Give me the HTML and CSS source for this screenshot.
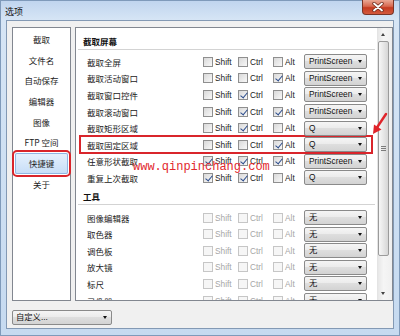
FILE: index.html
```html
<!DOCTYPE html>
<html lang="zh-CN">
<head>
    <meta charset="UTF-8">
    <meta name="viewport" content="width=device-width, initial-scale=1.0">
    <title>选项</title>
    <link rel="stylesheet" href="styles.css">
</head>
<body>
    <div class="window">
        <div class="titlebar">
            <span class="title">选项</span>
            <div class="close-btn">
                <svg viewBox="0 0 12 10" width="12" height="10">
                    <path d="M2 1.5 L10 8.5 M10 1.5 L2 8.5" stroke="#6b2a1c" stroke-width="3.4" stroke-linecap="round"/>
                    <path d="M2 1.5 L10 8.5 M10 1.5 L2 8.5" stroke="#fff" stroke-width="1.8" stroke-linecap="round"/>
                </svg>
            </div>
        </div>

        <div class="client">
            <div class="panes">
                <ul class="nav">
                    <li>截取</li>
                    <li>文件名</li>
                    <li>自动保存</li>
                    <li>编辑器</li>
                    <li>图像</li>
                    <li>FTP 空间</li>
                    <li class="selected">快捷键</li>
                    <li>关于</li>
                </ul>

                <div class="main">
                    <div class="content">
                        <div class="section">
                            <div class="section-head">截取屏幕</div>
                            <div class="rows">
                                <div class="row">
                                    <span class="label">截取全屏</span>
                                    <span class="check"><span class="box"></span>Shift</span>
                                    <span class="check"><span class="box"></span>Ctrl</span>
                                    <span class="check"><span class="box"></span>Alt</span>
                                    <span class="combo">PrintScreen</span>
                                </div>
                                <div class="row">
                                    <span class="label">截取活动窗口</span>
                                    <span class="check"><span class="box"></span>Shift</span>
                                    <span class="check"><span class="box"></span>Ctrl</span>
                                    <span class="check"><span class="box checked"></span>Alt</span>
                                    <span class="combo">PrintScreen</span>
                                </div>
                                <div class="row">
                                    <span class="label">截取窗口控件</span>
                                    <span class="check"><span class="box"></span>Shift</span>
                                    <span class="check"><span class="box checked"></span>Ctrl</span>
                                    <span class="check"><span class="box"></span>Alt</span>
                                    <span class="combo">PrintScreen</span>
                                </div>
                                <div class="row">
                                    <span class="label">截取滚动窗口</span>
                                    <span class="check"><span class="box"></span>Shift</span>
                                    <span class="check"><span class="box checked"></span>Ctrl</span>
                                    <span class="check"><span class="box checked"></span>Alt</span>
                                    <span class="combo">PrintScreen</span>
                                </div>
                                <div class="row">
                                    <span class="label">截取矩形区域</span>
                                    <span class="check"><span class="box"></span>Shift</span>
                                    <span class="check"><span class="box checked"></span>Ctrl</span>
                                    <span class="check"><span class="box"></span>Alt</span>
                                    <span class="combo">Q</span>
                                </div>
                                <div class="row marked">
                                    <span class="label">截取固定区域</span>
                                    <span class="check"><span class="box"></span>Shift</span>
                                    <span class="check"><span class="box"></span>Ctrl</span>
                                    <span class="check"><span class="box checked"></span>Alt</span>
                                    <span class="combo">Q</span>
                                </div>
                                <div class="row">
                                    <span class="label">任意形状截取</span>
                                    <span class="check"><span class="box checked"></span>Shift</span>
                                    <span class="check"><span class="box checked"></span>Ctrl</span>
                                    <span class="check"><span class="box checked"></span>Alt</span>
                                    <span class="combo">PrintScreen</span>
                                </div>
                                <div class="row">
                                    <span class="label">重复上次截取</span>
                                    <span class="check"><span class="box checked"></span>Shift</span>
                                    <span class="check"><span class="box checked"></span>Ctrl</span>
                                    <span class="check"><span class="box"></span>Alt</span>
                                    <span class="combo">Q</span>
                                </div>
                            </div>
                        </div>

                        <div class="section tools">
                            <div class="section-head">工具</div>
                            <div class="rows">
                                <div class="row disabled">
                                    <span class="label">图像编辑器</span>
                                    <span class="check"><span class="box"></span>Shift</span>
                                    <span class="check"><span class="box"></span>Ctrl</span>
                                    <span class="check"><span class="box"></span>Alt</span>
                                    <span class="combo">无</span>
                                </div>
                                <div class="row disabled">
                                    <span class="label">取色器</span>
                                    <span class="check"><span class="box"></span>Shift</span>
                                    <span class="check"><span class="box"></span>Ctrl</span>
                                    <span class="check"><span class="box"></span>Alt</span>
                                    <span class="combo">无</span>
                                </div>
                                <div class="row disabled">
                                    <span class="label">调色板</span>
                                    <span class="check"><span class="box"></span>Shift</span>
                                    <span class="check"><span class="box"></span>Ctrl</span>
                                    <span class="check"><span class="box"></span>Alt</span>
                                    <span class="combo">无</span>
                                </div>
                                <div class="row disabled">
                                    <span class="label">放大镜</span>
                                    <span class="check"><span class="box"></span>Shift</span>
                                    <span class="check"><span class="box"></span>Ctrl</span>
                                    <span class="check"><span class="box"></span>Alt</span>
                                    <span class="combo">无</span>
                                </div>
                                <div class="row disabled">
                                    <span class="label">标尺</span>
                                    <span class="check"><span class="box"></span>Shift</span>
                                    <span class="check"><span class="box"></span>Ctrl</span>
                                    <span class="check"><span class="box"></span>Alt</span>
                                    <span class="combo">无</span>
                                </div>
                                <div class="row disabled">
                                    <span class="label">录像器</span>
                                    <span class="check"><span class="box"></span>Shift</span>
                                    <span class="check"><span class="box"></span>Ctrl</span>
                                    <span class="check"><span class="box"></span>Alt</span>
                                    <span class="combo">无</span>
                                </div>
                            </div>
                        </div>
                    </div>

                    <div class="scrollbar">
                        <div class="sb-btn up"></div>
                        <div class="sb-thumb"><span class="grip"></span></div>
                        <div class="sb-track"></div>
                        <div class="sb-btn down"></div>
                    </div>
                </div>
            </div>

            <div class="footer">
                <span class="combo wide">自定义...</span>
            </div>
        </div>

        <!-- annotations drawn over the dialog -->
        <div class="watermark">www.qinpinchang.com</div>
        <svg class="pointer" viewBox="0 0 24 28" width="24" height="28">
            <line x1="20" y1="4" x2="10" y2="19" stroke="#e0242a" stroke-width="2.4" stroke-linecap="round"/>
            <polygon points="7,24 15.5,19.5 8,14.5" fill="#e0242a"/>
        </svg>
    </div>
</body>
</html>
```

FILE: styles.css
```css
* {
    box-sizing: border-box;
}
html, body {
    margin: 0;
}
body {
    width: 400px;
    height: 336px;
    overflow: hidden;
    font-family: "Noto Sans CJK SC", sans-serif;
    color: #1b1b1b;
}
.window {
    position: relative;
    width: 400px;
    height: 336px;
    display: flex;
    flex-direction: column;
    background: linear-gradient(to bottom, #bfd4ee 0, #d6e5f5 20px, #c6daf0 100%);
    box-shadow: inset 0 0 0 1px #7f9aba;
}
.titlebar {
    height: 20px;
    display: flex;
    justify-content: space-between;
    align-items: flex-start;
    padding-left: 5px;
}
.title {
    font-size: 9px;
    line-height: 20px;
    padding-top: 2px;
    color: #111;
}
.close-btn {
    width: 32px;
    height: 15px;
    margin-right: 6px;
    display: flex;
    justify-content: center;
    align-items: center;
    border: 1px solid #7a3426;
    border-top: 0;
    border-radius: 0 0 4px 4px;
    background: linear-gradient(to bottom, #eaa895, #d8684f 45%, #c53a20 55%, #d35a3e);
}
.client {
    flex: 1;
    margin: 0 6px 7px;
    border: 1px solid #8399b4;
    background: #f0f0f0;
    display: flex;
    flex-direction: column;
    padding: 6px 0 0 5px;
    min-height: 0;
}
.panes {
    flex: 1;
    display: flex;
    gap: 4px;
    min-height: 0;
}
.nav {
    width: 59px;
    margin: 0;
    padding: 1px 0 0;
    list-style: none;
    background: #fff;
    border: 1px solid #828790;
}
.nav li {
    height: 20.7px;
    line-height: 20.7px;
    margin: 0 2px;
    text-align: center;
    font-size: 8.5px;
}
.nav li.selected {
    background: linear-gradient(to bottom, #e6f1fd, #c6ddf7);
    border-radius: 2px;
    box-shadow: inset 0 0 0 1px #90b5e2;
    outline: 2px solid #d9252b;
    outline-offset: 1px;
}
.main {
    flex: 1;
    display: flex;
    background: #fff;
    border: 1px solid #828790;
    overflow: hidden;
}
.content {
    flex: 1;
    padding-top: 6px;
    overflow: hidden;
}
.section-head {
    margin: 0 2px;
    padding-left: 5px;
    height: 16px;
    line-height: 15px;
    border-bottom: 1px solid #d3d3d3;
    font-size: 8.5px;
    font-weight: bold;
    color: #111;
}
.section.tools {
    margin-top: 3px;
}
.rows {
    margin: 0 5px 0 4px;
    padding-top: 3.5px;
}
.section.tools .rows {
    padding-top: 4px;
}
.row {
    display: grid;
    grid-template-columns: 116px 35px 35px 31px 63px;
    align-items: center;
    height: 16.6px;
    padding-left: 7px;
    font-size: 8.5px;
}
.row.marked {
    outline: 2px solid #d9252b;
    outline-offset: -1px;
}
.check {
    display: flex;
    align-items: center;
    gap: 2px;
    font-family: "Liberation Sans", sans-serif;
    font-size: 8.3px;
    color: #222;
}
.box {
    position: relative;
    width: 10px;
    height: 10px;
    border: 1px solid #8f8f8f;
    background: linear-gradient(135deg, #d9d9d9, #f8f8f8);
}
.box.checked::after {
    content: "";
    position: absolute;
    left: 2.5px;
    top: 0;
    width: 3px;
    height: 6px;
    border: solid #2b4c8c;
    border-width: 0 1.6px 1.6px 0;
    transform: rotate(40deg);
}
.row.disabled .check {
    color: #a6a6a6;
}
.row.disabled .box {
    border-color: #c6c6c6;
    background: #f6f6f6;
}
.combo {
    position: relative;
    display: block;
    height: 15px;
    border: 1px solid #8a8a8a;
    border-radius: 2px;
    background: linear-gradient(to bottom, #f5f5f5, #ececec 45%, #dedede 50%, #d3d3d3);
    font-family: "Liberation Sans", "Noto Sans CJK SC", sans-serif;
    font-size: 8.3px;
    line-height: 13px;
    padding-left: 4px;
    color: #111;
}
.combo::after {
    content: "";
    position: absolute;
    right: 4px;
    top: 5px;
    width: 0;
    height: 0;
    border-left: 2.5px solid transparent;
    border-right: 2.5px solid transparent;
    border-top: 3px solid #111;
}
.combo.wide {
    width: 100px;
    padding-left: 3px;
}
.footer {
    height: 27px;
    padding-top: 9px;
}
.scrollbar {
    width: 15px;
    display: flex;
    flex-direction: column;
    background: linear-gradient(to right, #e7e7e7, #f5f5f5 40%, #efefef);
    border-left: 1px solid #e4e4e4;
}
.sb-btn {
    position: relative;
    width: 11px;
    height: 13px;
}
.sb-btn::after {
    content: "";
    position: absolute;
    left: 3px;
    top: 5px;
    width: 0;
    height: 0;
    border-left: 2.5px solid transparent;
    border-right: 2.5px solid transparent;
}
.sb-btn.up::after {
    border-bottom: 3px solid #444;
}
.sb-btn.down::after {
    border-top: 3px solid #444;
}
.sb-thumb {
    width: 11px;
    height: 215px;
    display: flex;
    justify-content: center;
    align-items: center;
    border: 1px solid #9b9b9b;
    border-radius: 2px;
    background: linear-gradient(to right, #f7f7f7, #e7e7e7 50%, #d6d6d6);
}
.grip {
    width: 5px;
    height: 5px;
    background: repeating-linear-gradient(to bottom, #7c7c7c 0, #7c7c7c 1px, transparent 1px, transparent 2px);
}
.sb-track {
    flex: 1;
}
.watermark {
    position: absolute;
    left: 133px;
    top: 161px;
    font-family: "Liberation Mono", monospace;
    font-size: 12px;
    line-height: 12px;
    color: #e2282e;
    white-space: nowrap;
}
.pointer {
    position: absolute;
    left: 366px;
    top: 110px;
}
```
